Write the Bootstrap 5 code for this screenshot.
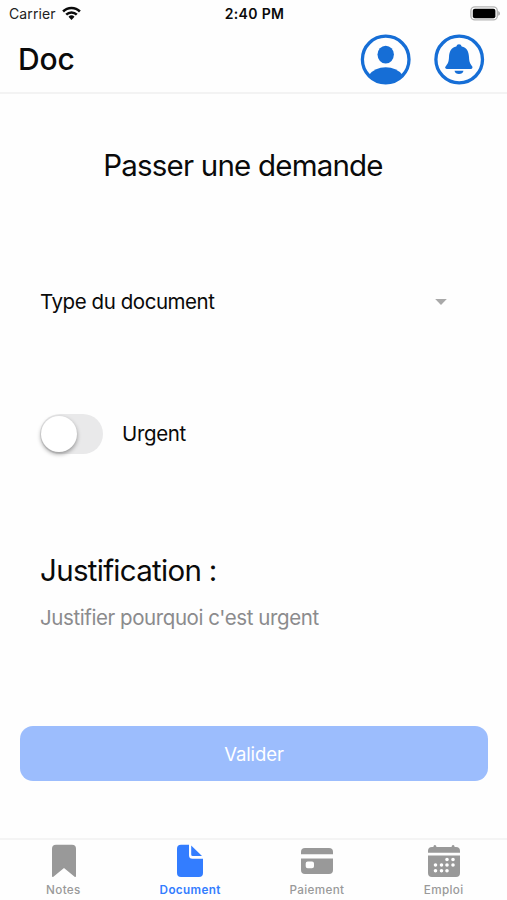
<!DOCTYPE html>
<html lang="fr">
<head>
<meta charset="utf-8">
<meta name="viewport" content="width=device-width, initial-scale=1">
<title>Doc</title>
<link href="https://cdn.jsdelivr.net/npm/bootstrap@5.3.0/dist/css/bootstrap.min.css" rel="stylesheet">
<style>
body{font-family:Inter,"Liberation Sans",sans-serif;color:#0a0a0a;background:#fefefe;height:900px;overflow:hidden}
svg{display:block;flex:none;overflow:visible}
.status{height:28px;font-size:14px;line-height:28px;padding:0 7px 0 9px}
.status .carrier{letter-spacing:.1px;color:#222}
.status .clock{font-weight:600;font-size:14px;letter-spacing:.35px}
.topbar{height:66px;border-bottom:2px solid #f3f3f3;padding:6px 23px 0 18px}
.brand{font-size:30px;font-weight:500;line-height:51px;letter-spacing:-.15px}
.t-xl{font-size:29.5px;line-height:40px;letter-spacing:-.8px;color:#0a0a0a}
.t-md{font-size:20.5px;line-height:30px;letter-spacing:-.44px}
.page-title{margin:51px 21px 0 0}
.pick{margin:102px 60px 0 40px}
.urgent{margin:96px 0 0 40px;gap:19px;height:41px}
.urgent .t-md{letter-spacing:-.35px}
.track{width:63px;height:40px;border-radius:20px;background:#e9e9ea;padding:2px 1px}
.knob{width:36px;height:36px;border-radius:50%;background:#fff;box-shadow:0 2px 4px rgba(0,0,0,.38)}
.reason{margin:96px 40px 0 40px}
.reason h2{letter-spacing:-.7px}
.hint{color:#8b8b8d;margin-top:13px;letter-spacing:-.42px}
.submit{height:55px;margin:93px 19px 0 20px;border-radius:13px;--bs-btn-disabled-bg:#9cbdfd;--bs-btn-disabled-opacity:1;--bs-btn-border-width:0;--bs-btn-disabled-color:#fff;font-size:18.5px;letter-spacing:-.1px;padding-top:8px}
.tabs{height:62px;border-top:2px solid #f4f4f4}
.tab{width:25%;color:#999;font-size:11.7px;font-weight:500;line-height:18px;letter-spacing:.35px;padding-top:4px}
.tab.on{color:#337dff;font-weight:600}
</style>
</head>
<body class="d-flex flex-column">
<div class="status d-flex align-items-center">
  <div class="d-flex align-items-center w-25">
    <span class="carrier">Carrier</span>
    <svg class="ms-1" width="20" height="16" viewBox="0 0 20 16" fill="none" stroke="#0a0a0a" stroke-width="2.5"><g transform="translate(1.500 -.7)"><path d="M1.600 6.200a11.800 11.800 0 0 1 16.800 0M4.700 9.300a7.500 7.500 0 0 1 10.600 0"/><path d="M7 11.500a4.300 4.300 0 0 1 6 0l-3 3.100z" fill="#0a0a0a" stroke="none"/></g></svg>
  </div>
  <div class="clock w-50 text-center">2:40 PM</div>
  <div class="w-25 d-flex justify-content-end">
    <svg width="31" height="16" viewBox="0 0 31 16"><rect x="1.900" y=".9" width="26.400" height="13" rx="4" fill="#fff" stroke="#b5b5b5" stroke-width="1.400"/><rect x="3.800" y="2.700" width="22.600" height="9.500" rx="2" fill="#000"/><path d="M29.200 5q1.800.6 1.800 2.400t-1.800 2.400z" fill="#a9a9a9"/></svg>
  </div>
</div>
<header class="topbar d-flex">
  <div class="brand flex-grow-1">Doc</div>
  <div class="d-flex gap-4">
    <svg width="50" height="51" viewBox="0 0 50 51"><circle cx="25.700" cy="25.500" r="23.300" fill="none" stroke="#166ed6" stroke-width="3.300"/><ellipse cx="25.700" cy="20.600" rx="8.200" ry="8.900" fill="#166ed6"/><path d="M9 41Q15 33.300 25.700 33.300T42.500 41Q35.500 49.200 25.700 49.200T9 41z" fill="#166ed6"/></svg>
    <svg width="50" height="51" viewBox="0 0 50 51"><circle cx="25.200" cy="25.500" r="23.300" fill="none" stroke="#166ed6" stroke-width="3.300"/><path d="M25 10.200q2.200 0 2.700 2.200c5 1 7.100 4.900 7.300 10.600.2 5 1.200 6.800 3 9 1 1.300.4 3-1.200 3H13.200q-1.600 0-2-1.200c-.2-.8.2-1.300.8-1.900 1.800-2.100 2.800-3.900 3-8.900.2-5.700 2.300-9.600 7.300-10.600q.5-2.200 2.700-2.200zM20.500 36.800h9q-.8 3.300-4.500 3.300t-4.500-3.300z" fill="#166ed6"/></svg>
  </div>
</header>
<main class="d-flex flex-column flex-grow-1">
  <h1 class="page-title t-xl fw-normal text-center mb-0">Passer une demande</h1>
  <div class="pick t-md d-flex align-items-center justify-content-between">
    <span>Type du document</span>
    <svg width="12" height="7" viewBox="0 0 12 7"><path d="M.2 0h11.600L6 6z" fill="#a9a9a9"/></svg>
  </div>
  <div class="urgent d-flex align-items-center">
    <div class="track" role="switch" aria-checked="false"><div class="knob"></div></div>
    <span class="t-md">Urgent</span>
  </div>
  <div class="reason">
    <h2 class="t-xl fw-normal mb-0">Justification :</h2>
    <div class="t-md hint">Justifier pourquoi c'est urgent</div>
  </div>
  <button class="submit btn btn-primary" disabled>Valider</button>
</main>
<nav class="tabs d-flex text-center">
  <div class="tab d-flex flex-column align-items-center">
    <svg width="34" height="37" viewBox="0 0 34 37"><path d="M10 .7h16a4 4 0 0 1 4 4v27q0 2-1.700.7L18 24 7.700 32.400Q6 33.700 6 31.700v-27a4 4 0 0 1 4-4z" fill="#999"/></svg>
    <span>Notes</span>
  </div>
  <div class="tab on d-flex flex-column align-items-center">
    <svg width="34" height="37" viewBox="0 0 34 37"><path d="M8 .7h8v10.500a3.500 3.500 0 0 0 3.500 3.500H30V29a4 4 0 0 1-4 4H8a4 4 0 0 1-4-4V4.700a4 4 0 0 1 4-4zM18.200 1.500L29 12h-9.300q-1.500 0-1.500-1.500z" fill="#337dff"/></svg>
    <span>Document</span>
  </div>
  <div class="tab d-flex flex-column align-items-center">
    <svg width="34" height="37" viewBox="0 0 34 37"><path d="M5 4h24a4 4 0 0 1 4 4v2.300H1V8a4 4 0 0 1 4-4z" fill="#999"/><path fill-rule="evenodd" d="M1 14.500h32V26a4 4 0 0 1-4 4H5a4 4 0 0 1-4-4zM7.700 17.500A2 2 0 0 0 5.700 19.500v2.700A2 2 0 0 0 7.700 24.200h4.300a2 2 0 0 0 2-2v-2.700A2 2 0 0 0 12 17.500z" fill="#999"/></svg>
    <span>Paiement</span>
  </div>
  <div class="tab d-flex flex-column align-items-center">
    <svg width="34" height="37" viewBox="0 0 34 37"><path d="M5 3h1.500V2q1.400-2 2.800 0v1h15.400V2q1.400-2 2.800 0v1H29a4 4 0 0 1 4 4v1.700H1V7a4 4 0 0 1 4-4zM1 11.500h32V29a4 4 0 0 1-4 4H5a4 4 0 0 1-4-4z" fill="#999"/><path d="M20 15.500h0M26 15.500h0M8.500 21h0M14.500 21h0M20 21h0M26 21h0M8.500 26.800h0M14.500 26.800h0M20 26.800h0" stroke="#fff" stroke-width="3.600" stroke-linecap="round"/></svg>
    <span>Emploi</span>
  </div>
</nav>
<script src="https://cdn.jsdelivr.net/npm/bootstrap@5.3.0/dist/js/bootstrap.bundle.min.js"></script>
</body>
</html>
